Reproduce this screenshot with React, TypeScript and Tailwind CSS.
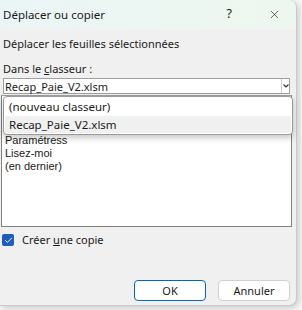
import { Check, X } from 'lucide-react'

const font = { fontFamily: '"Noto Sans", "Open Sans", sans-serif' }
const listFont = { fontFamily: '"Liberation Sans", Arial, sans-serif' }

export default function App() {
  return (
    <div className="relative w-[302px] h-[310px] bg-[#f7f7f7] overflow-hidden text-[11px] text-[#1a1a1a]" style={font}>
      <div className="w-[297px] h-[306px] bg-[#f0f0f0] rounded-br-[8px] rounded-tr-[8px] border-r border-b border-[#c9c9c9] shadow-[2px_2px_6px_rgba(0,0,0,0.18)] flex flex-col">
        {/* Title bar */}
        <div className="h-[29px] flex items-center rounded-tr-[8px] bg-gradient-to-r from-[#eaf5f6] to-[#eef7ee] pl-[3px]">
          <span className="text-[11.5px] leading-none">Déplacer ou copier</span>
          <span className="ml-auto mr-[36px] text-[12.5px] leading-none">?</span>
          <X className="w-[13px] h-[13px] mr-[15px]" strokeWidth={1.2} />
        </div>

        {/* Body */}
        <div className="relative flex-1 flex flex-col">
          <div className="pl-[3px] mt-[7px] leading-[16px]">Déplacer les feuilles sélectionnées</div>
          <div className="pl-[3px] mt-[9px] leading-[16px]">
            Dans le <span className="underline">c</span>lasseur :
          </div>
          <div className="ml-[3px] mr-[6px] mt-[1px] h-[16px] bg-white border border-[#a0a0a0] flex items-center">
            <span className="pl-[1px] leading-none">Recap_Paie_V2.xlsm</span>
            <div className="ml-auto w-[8px] h-full flex items-center justify-center border-l border-[#d0d0d0]">
              <svg width="6" height="4" viewBox="0 0 6 4">
                <path d="M0.5 0.5 L3 3 L5.5 0.5" fill="none" stroke="#333" strokeWidth="1.2" />
              </svg>
            </div>
          </div>

          {/* List box */}
          <div className="ml-[1px] mr-[4px] mt-[1px] h-[132px] bg-white border border-[#828282] border-t-[#a0a0a0] flex flex-col pt-[38px] pl-[3px] leading-[13px] text-[11px]" style={listFont}>
            <div>Paramétress</div>
            <div>Lisez-moi</div>
            <div>(en dernier)</div>
          </div>

          {/* Dropdown popup */}
          <div className="absolute left-[3px] top-[67px] w-[290px] h-[39px] bg-white border border-[#9a9a9a] rounded-[4px] shadow-[0_3px_6px_rgba(0,0,0,0.22)] flex flex-col pt-[1px] px-[1px] text-[11.5px]">
            <div className="h-[18px] flex items-center pl-[4px]">(nouveau classeur)</div>
            <div className="h-[17px] flex items-center pl-[4px] bg-[#f0f0f0] rounded-[2px]">Recap_Paie_V2.xlsm</div>
          </div>

          {/* Checkbox */}
          <div className="flex items-center mt-[5px] pl-[2px]">
            <div className="w-[12px] h-[12px] rounded-[2px] bg-[#1d5fb8] flex items-center justify-center">
              <Check className="w-[9px] h-[9px] text-white" strokeWidth={2.5} />
            </div>
            <span className="ml-[8px] leading-[16px]">
              Créer <span className="underline">u</span>ne copie
            </span>
          </div>

          {/* Buttons */}
          <div className="mt-auto mb-[4px] flex justify-end gap-[12px] pr-[6px]">
            <button className="w-[72px] h-[21px] bg-white border border-[#0067c0] rounded-[4px] text-[11px] leading-none" style={font}>
              OK
            </button>
            <button className="w-[72px] h-[21px] bg-white border border-[#d0d0d0] rounded-[4px] text-[11px] leading-none" style={font}>
              Annuler
            </button>
          </div>
        </div>
      </div>
    </div>
  )
}
